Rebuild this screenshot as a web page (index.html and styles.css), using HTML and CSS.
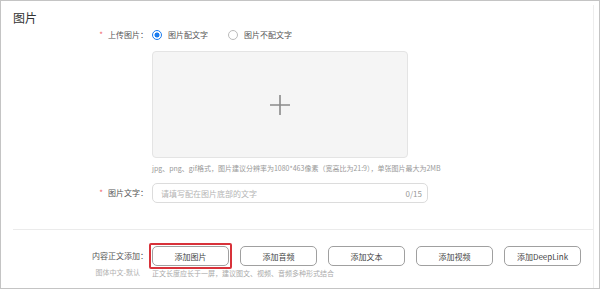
FILE: index.html
```html
<!DOCTYPE html>
<html lang="zh-CN">
<head>
    <meta charset="UTF-8">
    <title>图片</title>
    <link rel="stylesheet" href="styles.css">
</head>
<body>
    <div class="frame">
        <div class="panel">
            <h2 class="title">图片</h2>

            <div class="form-row">
                <div class="label"><span class="req">*</span>上传图片：</div>
                <div class="field radios">
                    <label class="radio checked"><span class="dot"></span>图片配文字</label>
                    <label class="radio"><span class="dot"></span>图片不配文字</label>
                </div>
            </div>

            <div class="form-row">
                <div class="label"></div>
                <div class="field">
                    <div class="upload">
                        <svg width="22" height="22" viewBox="0 0 22 22">
                            <path d="M11 1v20M1 11h20" stroke="#8a8a8a" stroke-width="1.6" fill="none"/>
                        </svg>
                    </div>
                    <div class="hint">jpg、png、gif格式，图片建议分辨率为1080*463像素（宽高比为21:9），单张图片最大为2MB</div>
                </div>
            </div>

            <div class="form-row row-text">
                <div class="label"><span class="req">*</span>图片文字：</div>
                <div class="field">
                    <div class="input">
                        <span class="placeholder">请填写配在图片底部的文字</span>
                        <span class="count">0/15</span>
                    </div>
                </div>
            </div>

            <div class="divider"></div>

            <div class="form-row row-add">
                <div class="label">
                    内容正文添加：
                    <div class="sub-label">图体中文-默认</div>
                </div>
                <div class="field">
                    <div class="buttons">
                        <button class="btn active">添加图片</button>
                        <button class="btn">添加音频</button>
                        <button class="btn">添加文本</button>
                        <button class="btn">添加视频</button>
                        <button class="btn">添加DeepLink</button>
                    </div>
                    <div class="tip">正文长度应长于一屏，建议图文、视频、音频多种形式结合</div>
                </div>
            </div>
        </div>
    </div>
</body>
</html>
```

FILE: styles.css
```css
body {
    margin: 0;
    font-family: "Noto Sans CJK SC", "Noto Sans", sans-serif;
    color: #333;
    background: #fff;
}
.frame {
    box-sizing: border-box;
    width: 600px;
    height: 289px;
    border: 1px solid #c4c4c4;
    padding: 4px 5px 0 0;
    overflow: hidden;
}
.panel {
    height: 100%;
    border-right: 1px solid #ededed;
    padding-left: 12px;
}
.title {
    margin: 0;
    padding-top: 6px;
    font-size: 12px;
    line-height: 14px;
    font-weight: normal;
    color: #333;
}
.form-row {
    display: flex;
    margin-top: 3px;
}
.label {
    width: 135px;
    flex-shrink: 0;
    text-align: right;
    font-size: 8px;
    line-height: 14px;
    color: #555;
}
.req {
    color: #f0646c;
    margin-right: 5px;
}
.field {
    margin-left: 4px;
}
.radios {
    display: flex;
    gap: 20px;
    font-size: 8px;
    line-height: 14px;
    color: #555;
}
.radio {
    display: flex;
    align-items: center;
    gap: 6px;
}
.radio .dot {
    box-sizing: border-box;
    width: 10px;
    height: 10px;
    border-radius: 50%;
    border: 1px solid #bbb;
    background: #fff;
}
.radio.checked .dot {
    border-color: #1a7cf0;
    background: radial-gradient(circle, #1a7cf0 2.2px, #fff 2.8px);
}
.upload {
    box-sizing: border-box;
    width: 256px;
    height: 107px;
    margin-top: 6px;
    background: #f5f5f5;
    border: 1px solid #e4e4e4;
    border-radius: 4px;
    display: flex;
    align-items: center;
    justify-content: center;
}
.hint {
    margin-top: 4px;
    font-size: 7px;
    line-height: 12px;
    color: #999;
    white-space: nowrap;
}
.row-text {
    margin-top: 9px;
}
.row-text .label {
    line-height: 20px;
}
.input {
    box-sizing: border-box;
    width: 276px;
    height: 20px;
    border: 1px solid #dcdcdc;
    border-radius: 5px;
    padding: 0 5px 0 8px;
    display: flex;
    align-items: center;
    justify-content: space-between;
    font-size: 8px;
}
.placeholder {
    color: #b4b4b4;
}
.count {
    color: #999;
}
.divider {
    margin-top: 26px;
    border-top: 1px solid #ebebeb;
}
.row-add {
    margin-top: 16px;
}
.row-add .label {
    line-height: 20px;
    color: #555;
}
.sub-label {
    padding-right: 8px;
    font-size: 7px;
    line-height: 12px;
    color: #b0b0b0;
}
.buttons {
    display: flex;
    gap: 11px;
}
.btn {
    box-sizing: border-box;
    width: 77px;
    height: 20px;
    padding: 0;
    border: 1px solid #a0a0a0;
    border-radius: 5px;
    background: #fff;
    font-family: inherit;
    font-size: 8px;
    color: #444;
}
.btn.active {
    position: relative;
}
.btn.active::after {
    content: "";
    position: absolute;
    inset: -4px;
    border: 2px solid #d8323a;
    border-radius: 2px;
}
.tip {
    margin-top: 1px;
    font-size: 7px;
    line-height: 12px;
    color: #aaa;
}
```
